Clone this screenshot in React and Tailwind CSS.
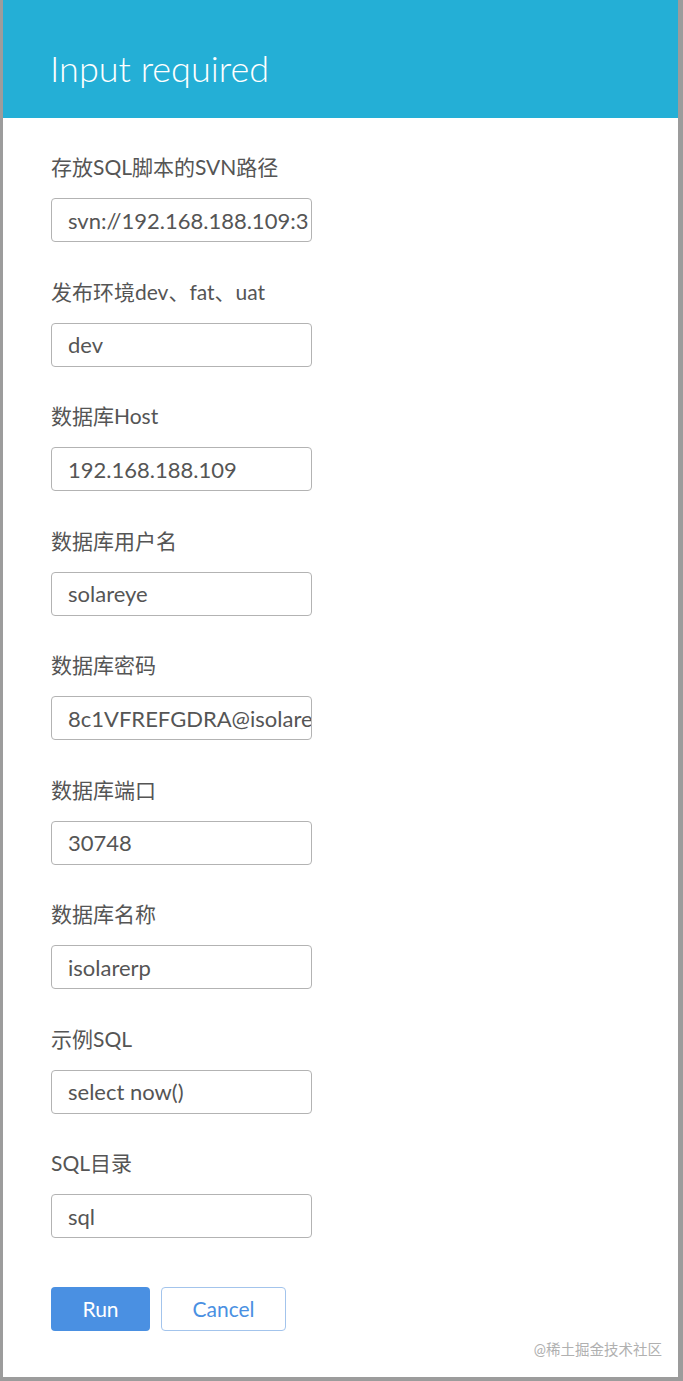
import React from 'react';

const fields = [
  { label: '存放SQL脚本的SVN路径', value: 'svn://192.168.188.109:3' },
  { label: '发布环境dev、fat、uat', value: 'dev' },
  { label: '数据库Host', value: '192.168.188.109' },
  { label: '数据库用户名', value: 'solareye' },
  { label: '数据库密码', value: '8c1VFREFGDRA@isolarerp' },
  { label: '数据库端口', value: '30748' },
  { label: '数据库名称', value: 'isolarerp' },
  { label: '示例SQL', value: 'select now()' },
  { label: 'SQL目录', value: 'sql' },
];

const font = { fontFamily: 'Lato, "Noto Sans CJK SC", sans-serif' };

const Field = ({ label, value, first }) => (
  <div className={first ? '' : 'mt-[35.5px]'}>
    {/* Label */}
    <div className="text-[21px] leading-[28px] text-[#555] mb-[17px] whitespace-nowrap">{label}</div>
    {/* Input */}
    <div className="w-[261px] h-[44px] border border-[#b3b3b3] rounded-[4px] bg-white overflow-hidden flex items-center pl-[16px]">
      <span className="text-[22px] text-[#555] whitespace-nowrap">{value}</span>
    </div>
  </div>
);

export default function App() {
  return (
    <div className="w-[683px] h-[1381px] bg-[#9c9c9c] flex" style={font}>
      <div className="relative ml-[3px] w-[675px] h-[1377px] bg-white flex flex-col">
        {/* Header */}
        <div className="h-[118px] bg-[#24afd6] pl-[47px] pt-[46px]">
          <div className="text-white text-[36px] font-light leading-[44px]">Input required</div>
        </div>

        {/* Form */}
        <div className="pl-[48px] pt-[35px]">
          {fields.map((f, i) => (
            <Field key={f.label} label={f.label} value={f.value} first={i === 0} />
          ))}

          {/* Actions */}
          <div className="flex gap-[11px] mt-[49px]">
            <button className="w-[99px] h-[44px] rounded-[4px] bg-[#4a90e2] text-white text-[21px]">Run</button>
            <button className="w-[125px] h-[44px] rounded-[4px] border border-[#a3c4ec] bg-white text-[#4a90e2] text-[21px]">Cancel</button>
          </div>
        </div>

        {/* Watermark */}
        <div className="absolute right-[16px] bottom-[16px] text-[14.5px] text-[#b0b0b0]">@稀土掘金技术社区</div>
      </div>
    </div>
  );
}
